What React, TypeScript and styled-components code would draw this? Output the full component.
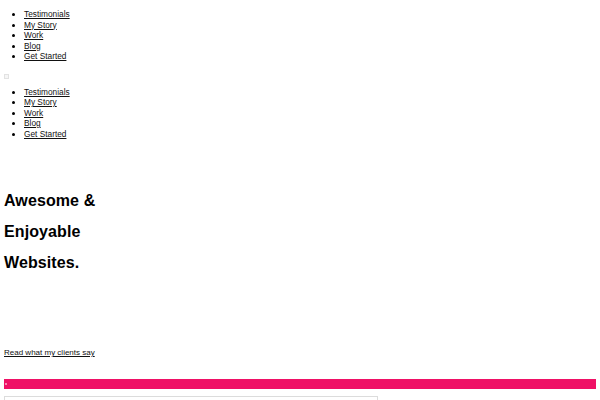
import React from 'react'
import styled, { createGlobalStyle } from 'styled-components'

const GlobalStyle = createGlobalStyle`
  body {
    margin: 0;
    background: #ffffff;
    font-family: "Liberation Sans", Arial, sans-serif;
    color: #000000;
  }
`

const Page = styled.div`
  padding: 0 4px;
`

const NavList = styled.ul<{ $top: number }>`
  margin: ${p => p.$top}px 0 0 0;
  padding-left: 20px;
  font-size: 8.3px;
  line-height: 10.5px;
  li a {
    color: #111;
    text-decoration: underline;
  }
`

const Toggle = styled.div`
  width: 3px;
  height: 3px;
  margin-top: 12px;
  border: 1px solid #e2e2e2;
  background: #f6f6f6;
`

const Hero = styled.h1`
  margin: 46px 0 0 0;
  font-size: 16px;
  line-height: 31px;
  font-weight: bold;
  letter-spacing: 0.1px;
`

const ReadMore = styled.a`
  display: block;
  margin-top: 70px;
  font-size: 8px;
  line-height: 10px;
  color: #111;
  text-decoration: underline;
`

const Bar = styled.div`
  margin-top: 21px;
  height: 10px;
  background: #ef1166;
  position: relative;
`

const BarMark = styled.span`
  position: absolute;
  left: 1px;
  top: 4px;
  width: 2px;
  height: 2px;
  background: #f78ab2;
`

const Box = styled.div`
  margin-top: 7px;
  width: 372px;
  height: 20px;
  border: 1px solid #dcdcdc;
  border-bottom: none;
`

const links = ['Testimonials', 'My Story', 'Work', 'Blog', 'Get Started']

const Nav: React.FC<{ top: number }> = ({ top }) => (
  <NavList $top={top}>
    {links.map(l => (
      <li key={l}><a href="#">{l}</a></li>
    ))}
  </NavList>
)

const App: React.FC = () => {
  return (
    <>
      <GlobalStyle />
      <Page>
        <Nav top={9} />
        <Toggle />
        <Nav top={8} />
        <Hero>
          Awesome &amp;<br />
          Enjoyable<br />
          Websites.
        </Hero>
        <ReadMore href="#">Read what my clients say</ReadMore>
        <Bar><BarMark /></Bar>
        <Box />
      </Page>
    </>
  )
}

export default App
